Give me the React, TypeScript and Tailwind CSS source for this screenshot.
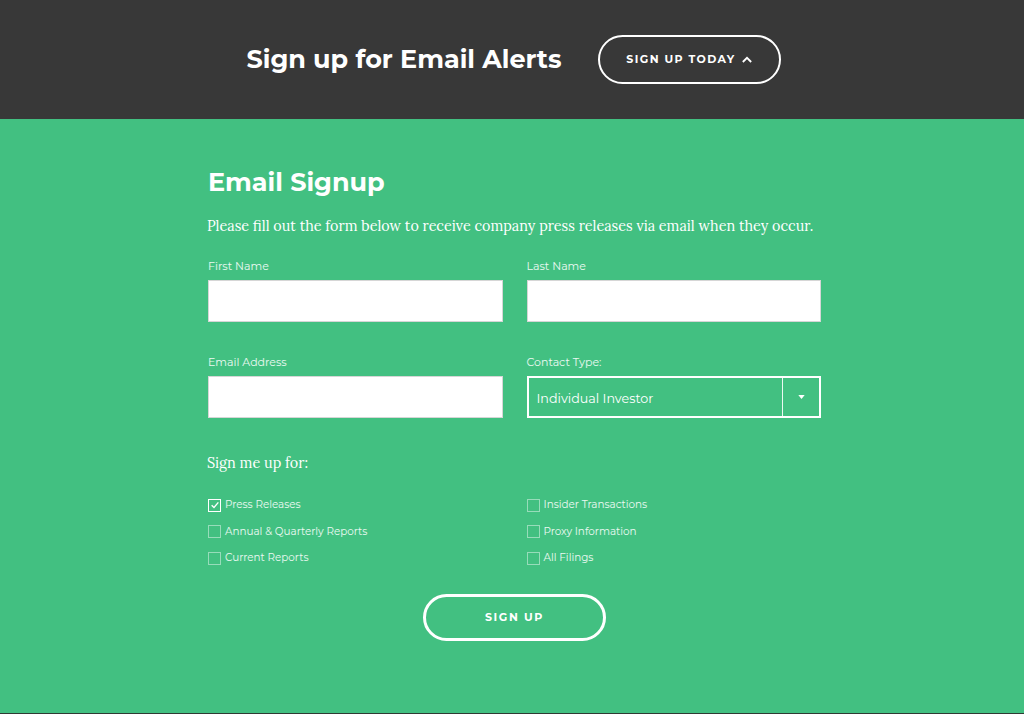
import React, { useState } from 'react';

const sans = "font-['Montserrat','Noto_Sans','DejaVu_Sans',sans-serif]";
const serif = "font-['Lora','DejaVu_Serif','Liberation_Serif',serif]";

interface Topic {
  id: string;
  label: string;
}

const leftTopics: Topic[] = [
  { id: 'press', label: 'Press Releases' },
  { id: 'annual', label: 'Annual & Quarterly Reports' },
  { id: 'current', label: 'Current Reports' },
];

const rightTopics: Topic[] = [
  { id: 'insider', label: 'Insider Transactions' },
  { id: 'proxy', label: 'Proxy Information' },
  { id: 'all', label: 'All Filings' },
];

const Field: React.FC<{ label: string }> = ({ label }) => (
  <div className="flex flex-col">
    <label className={`${sans} text-[11px] text-white/90 mb-[7px] leading-[14px]`}>{label}</label>
    <input type="text" className="h-[42px] bg-white border border-[#d6d6d6] outline-none px-3" />
  </div>
);

const CheckRow: React.FC<{ topic: Topic; checked: boolean; onToggle: () => void }> = ({ topic, checked, onToggle }) => (
  <button type="button" onClick={onToggle} className="flex items-center gap-[4px] h-[14px] text-left">
    <span
      className={`w-[13px] h-[13px] flex items-center justify-center border ${
        checked ? 'border-white' : 'border-white/45'
      }`}
    >
      {checked && (
        <svg viewBox="0 0 12 12" className="w-[10px] h-[10px]" fill="none" stroke="white" strokeWidth="1.6">
          <path d="M2 6.2 L4.8 9 L10 2.8" />
        </svg>
      )}
    </span>
    <span className={`${sans} text-[10.4px] text-white/90`}>{topic.label}</span>
  </button>
);

export default function App() {
  const [selected, setSelected] = useState<string[]>(['press']);
  const toggle = (id: string) =>
    setSelected((s) => (s.includes(id) ? s.filter((x) => x !== id) : [...s, id]));

  return (
    <div className="min-h-[714px] bg-[#42c081] flex flex-col border-b border-[#2f3a33]">
      {/* Top banner */}
      <div className="bg-[#383838] h-[119px] flex items-center justify-center gap-[36px] pl-[3px]">
        <h2 className={`${sans} text-white text-[25.5px] font-bold`}>Sign up for Email Alerts</h2>
        <button
          type="button"
          className={`${sans} w-[183px] h-[49px] rounded-full border-2 border-white text-white text-[11px] font-bold tracking-[1.4px] flex items-center justify-center gap-[6px]`}
        >
          SIGN UP TODAY
          <svg viewBox="0 0 12 8" className="w-[10px] h-[7px]" fill="none" stroke="white" strokeWidth="2.2">
            <path d="M1 7 L6 2 L11 7" />
          </svg>
        </button>
      </div>

      {/* Form */}
      <div className="w-[613px] ml-[208px] pt-[47px] flex flex-col">
        <h1 className={`${sans} text-white text-[25.5px] font-bold leading-[32px]`}>Email Signup</h1>
        <p className={`${serif} text-white text-[14.35px] mt-[17px] leading-[22px] whitespace-nowrap -ml-px`}>
          Please fill out the form below to receive company press releases via email when they occur.
        </p>

        <div className="grid grid-cols-2 gap-x-[24px] gap-y-[33px] mt-[22px]">
          <Field label="First Name" />
          <Field label="Last Name" />
          <Field label="Email Address" />
          <div className="flex flex-col">
            <label className={`${sans} text-[11px] text-white/90 mb-[7px] leading-[14px]`}>Contact Type:</label>
            <div className="h-[42px] border-2 border-white flex items-stretch">
              <div className={`${sans} flex-1 flex items-center pl-[8px] pt-[3px] text-white text-[12.7px]`}>
                Individual Investor
              </div>
              <div className="w-[37px] border-l border-white/90 flex items-center justify-center">
                <svg viewBox="0 0 8 5" className="w-[7px] h-[4px]">
                  <path d="M0 0 H8 L4 5 Z" fill="white" />
                </svg>
              </div>
            </div>
          </div>
        </div>

        <p className={`${serif} text-white text-[14.4px] mt-[34px] leading-[22px] -ml-px`}>Sign me up for:</p>

        <div className="grid grid-cols-2 gap-x-[24px] mt-[24px]">
          <div className="flex flex-col gap-[12.5px]">
            {leftTopics.map((t) => (
              <CheckRow key={t.id} topic={t} checked={selected.includes(t.id)} onToggle={() => toggle(t.id)} />
            ))}
          </div>
          <div className="flex flex-col gap-[12.5px]">
            {rightTopics.map((t) => (
              <CheckRow key={t.id} topic={t} checked={selected.includes(t.id)} onToggle={() => toggle(t.id)} />
            ))}
          </div>
        </div>

        <div className="flex justify-center mt-[29px]">
          <button
            type="button"
            className={`${sans} w-[183px] h-[47px] rounded-full border-[3px] border-white text-white text-[11px] font-bold tracking-[1.6px]`}
          >
            SIGN UP
          </button>
        </div>
      </div>
    </div>
  );
}
